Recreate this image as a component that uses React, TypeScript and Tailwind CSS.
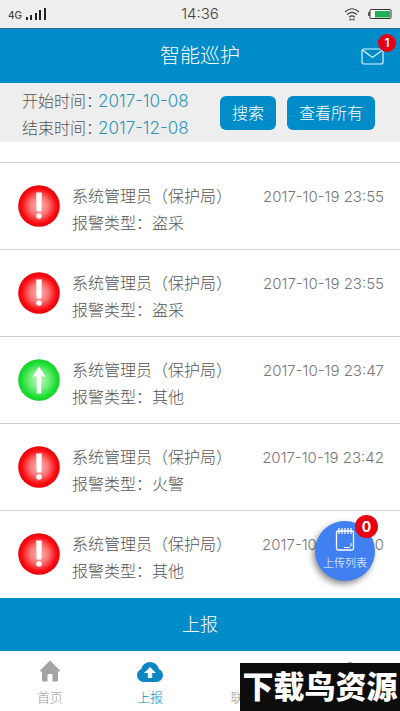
import { useState } from "react";

type Report = {
  id: number;
  reporter: string;
  type: string;
  time: string;
  handled?: boolean;
};

const reports: Report[] = [
  { id: 1, reporter: "系统管理员（保护局）", type: "盗采", time: "2017-10-19 23:55" },
  { id: 2, reporter: "系统管理员（保护局）", type: "盗采", time: "2017-10-19 23:55" },
  { id: 3, reporter: "系统管理员（保护局）", type: "其他", time: "2017-10-19 23:47", handled: true },
  { id: 4, reporter: "系统管理员（保护局）", type: "火警", time: "2017-10-19 23:42" },
  { id: 5, reporter: "系统管理员（保护局）", type: "其他", time: "2017-10-19 23:40" },
];

function StatusBar() {
  return (
    <div className="h-7 px-2 bg-[#eeeeee] grid grid-cols-3 items-center text-[#444]">
      <div className="flex items-end gap-1">
        <span className="text-[10px] leading-[9px] font-medium">4G</span>
        <svg className="w-5 h-3" viewBox="0 0 20 12" fill="#222">
          <rect x="0" y="9" width="2" height="3" />
          <rect x="4" y="7" width="2" height="5" />
          <rect x="9" y="5" width="2" height="7" />
          <rect x="13" y="2" width="2" height="10" />
          <rect x="18" y="0" width="2" height="12" />
        </svg>
      </div>
      <span className="text-center text-[15px] leading-5">14:36</span>
      <div className="flex items-center justify-end gap-2">
        <svg className="w-4 h-4" viewBox="0 0 16 16" fill="none" stroke="#444" strokeWidth="1.2" strokeLinecap="round">
          <path d="M1.5 5.5Q8 0 14.5 5.5" />
          <path d="M3.5 8.2Q8 4.500 12.5 8.2" />
          <path d="M5.5 10.800Q8 8.800 10.5 10.800" />
          <circle cx="6.500" cy="13.500" r=".5" fill="#444" />
          <circle cx="9.500" cy="13.500" r=".5" fill="#444" />
        </svg>
        <svg className="w-6 h-3" viewBox="0 0 24 12">
          <rect x="2" y="1.500" width="21" height="9" rx="1" fill="#fff" stroke="#333" />
          <path d="M1 4v4" stroke="#333" strokeWidth="1.500" />
          <rect x="7" y="3" width="15" height="6.500" fill="#1fb254" />
        </svg>
      </div>
    </div>
  );
}

function StatusIcon({ handled }: { handled?: boolean }) {
  const gradient = handled ? "url(#green-ball)" : "url(#red-ball)";

  return (
    <svg className="w-[42px] h-[42px] shrink-0" viewBox="0 0 42 42">
      <circle cx="21" cy="21" r="20.800" fill={gradient} />
      {handled ? (
        <path d="M21 7.500l6.500 10h-4.200v17h-4.600v-17h-4.200z" fill="#fff" />
      ) : (
        <g fill="#fff">
          <path d="M18.200 7.500h5.600l-.4 19h-4.800z" />
          <circle cx="21" cy="31" r="2.800" />
        </g>
      )}
    </svg>
  );
}

function ReportRow({ report }: { report: Report }) {
  return (
    <li className="h-[87px] pl-[18px] pr-4 flex items-center border-t border-[#cfcfcf]">
      <StatusIcon handled={report.handled} />
      <div className="ml-3 pt-2 flex-1 min-w-0 leading-[27px]">
        <div className="flex justify-between whitespace-nowrap">
          <span>{report.reporter}</span>
          <time className="text-[15px] text-[#777]">{report.time}</time>
        </div>
        <p>报警类型：{report.type}</p>
      </div>
    </li>
  );
}

function App() {
  const [startDate, setStartDate] = useState("2017-10-08");
  const [endDate, setEndDate] = useState("2017-12-08");

  return (
    <div className="relative min-h-screen flex flex-col bg-white font-light text-base text-[#555] font-['Inter','Noto_Sans_CJK_SC',sans-serif]">
      <svg className="absolute w-0 h-0" aria-hidden="true">
        <defs>
          <radialGradient id="red-ball">
            <stop offset="0" stopColor="#ffb5b5" />
            <stop offset=".45" stopColor="#fb7474" />
            <stop offset=".82" stopColor="#fa0d12" />
            <stop offset="1" stopColor="#e80008" />
          </radialGradient>
          <radialGradient id="green-ball">
            <stop offset="0" stopColor="#b8f8bd" />
            <stop offset=".45" stopColor="#74ee7e" />
            <stop offset=".82" stopColor="#20df34" />
            <stop offset="1" stopColor="#14cf2a" />
          </radialGradient>
        </defs>
      </svg>

      <StatusBar />

      <header className="h-[55px] px-4 grid grid-cols-3 items-center bg-[#008cc9] border-t border-[#24698a] text-white">
        <span />
        <h1 className="text-center text-xl">智能巡护</h1>
        <button className="relative justify-self-end" aria-label="消息">
          <svg className="w-[23px] h-[17px]" viewBox="0 0 23 17" fill="none" stroke="#d9f6ff" strokeWidth="1.200">
            <rect x="1" y="1" width="21" height="15" rx="2" />
            <path d="M1.500 2l10 7.500 10-7.500" />
          </svg>
          <span className="absolute -top-[14px] -right-3 size-[18px] rounded-full bg-[#e60012] text-xs leading-[18px] font-semibold">
            1
          </span>
        </button>
      </header>

      <form
        className="h-[59px] pl-[22px] pr-[25px] flex items-center bg-[#eeeeee]"
        onSubmit={(e) => e.preventDefault()}
      >
        <div className="flex-1 min-w-0 pt-1 leading-[27px]">
          <div className="flex">
            <label htmlFor="start" className="shrink-0">开始时间：</label>
            <input
              id="start"
              className="-ml-1 w-26 text-[17px] text-[#2f96bb] outline-none"
              value={startDate}
              onChange={(e) => setStartDate(e.target.value)}
            />
          </div>
          <div className="flex">
            <label htmlFor="end" className="shrink-0">结束时间：</label>
            <input
              id="end"
              className="-ml-1 w-26 text-[17px] text-[#2f96bb] outline-none"
              value={endDate}
              onChange={(e) => setEndDate(e.target.value)}
            />
          </div>
        </div>
        <div className="flex gap-[11px] shrink-0 text-white">
          <button type="submit" className="h-[34px] px-3 rounded-md bg-[#008cc9]">搜索</button>
          <button type="button" className="h-[34px] px-3 rounded-md bg-[#008cc9]">查看所有</button>
        </div>
      </form>

      <ul className="flex-1 pt-5">
        {reports.map((report) => (
          <ReportRow key={report.id} report={report} />
        ))}
      </ul>

      <button className="h-[53px] bg-[#008cc9] text-white text-lg">上报</button>

      <nav className="h-[60px] pt-2 grid grid-cols-4 text-[13px] leading-5 text-[#999]">
        <a href="#home" className="flex flex-col items-center gap-1">
          <svg className="w-6 h-6" viewBox="0 0 24 24" fill="#a3a3a3">
            <path d="M12 1.500L22 11.500q.3 1-.8 1H20V21q0 1.500-1.500 1.500h-4V16q0-1-1-1h-3q-1 0-1 1v6.500h-4Q4 22.500 4 21v-8.500H2.800q-1.100 0-.8-1z" />
          </svg>
          首页
        </a>
        <a href="#report" className="flex flex-col items-center gap-1 text-[#008cc9]">
          <svg className="w-7 h-6" viewBox="0 0 28 24">
            <path
              d="M7.500 23A6.800 6.800 0 0 1 1 16.500 6.800 6.800 0 0 1 5 10.300 9.200 9.200 0 0 1 23 10.300 6.800 6.800 0 0 1 27 16.500 6.800 6.800 0 0 1 20.500 23z"
              fill="#0a87c2"
            />
            <path d="M14 8l6 6h-3.800v5h-4.400v-5H8z" fill="#fff" />
          </svg>
          上报
        </a>
        <a href="#contacts" className="flex flex-col items-center gap-1">
          <svg className="w-6 h-6" viewBox="0 0 24 24" fill="#a3a3a3">
            <circle cx="12" cy="9" r="4" />
            <path d="M4 22q0-8 8-8t8 8z" />
          </svg>
          联系人
        </a>
        <a href="#me" className="flex flex-col items-center gap-1">
          <svg className="w-6 h-6" viewBox="0 0 24 24" fill="#a3a3a3">
            <circle cx="12" cy="8" r="5" />
            <path d="M3 23q0-9 9-9t9 9z" />
          </svg>
          我的
        </a>
      </nav>

      {/* Upload queue */}
      <button className="absolute right-[25px] bottom-[130px] size-[60px] rounded-full bg-[#4080f0] text-white shadow-[-2px_3px_6px_rgba(0,0,0,0.45)] flex flex-col items-center pt-[6px]">
        <svg className="w-5 h-6" viewBox="0 0 20 24" fill="none" stroke="#fff" strokeWidth="1.300">
          <rect x="1.500" y="4" width="17" height="19" rx="1.500" />
          <path d="M4 1v6M7 1v6M10 1v6M13 1v6M16 1v6" />
          <path d="M9 20.500h5.500l1.500-1.500v-3" strokeWidth="1" />
        </svg>
        <span className="text-[11px] leading-6 whitespace-nowrap">上传列表</span>
        <span className="absolute -top-[6px] -right-[3px] size-[23px] rounded-full bg-[#e60012] text-sm leading-[23px] font-bold">
          0
        </span>
      </button>

      {/* Site banner */}
      <div className="absolute right-0 bottom-0 w-40 h-12 bg-[#0d0d0d] text-white text-[31px] leading-[48px] font-black text-center whitespace-nowrap">
        下载鸟资源
      </div>
    </div>
  );
}

export default App;
